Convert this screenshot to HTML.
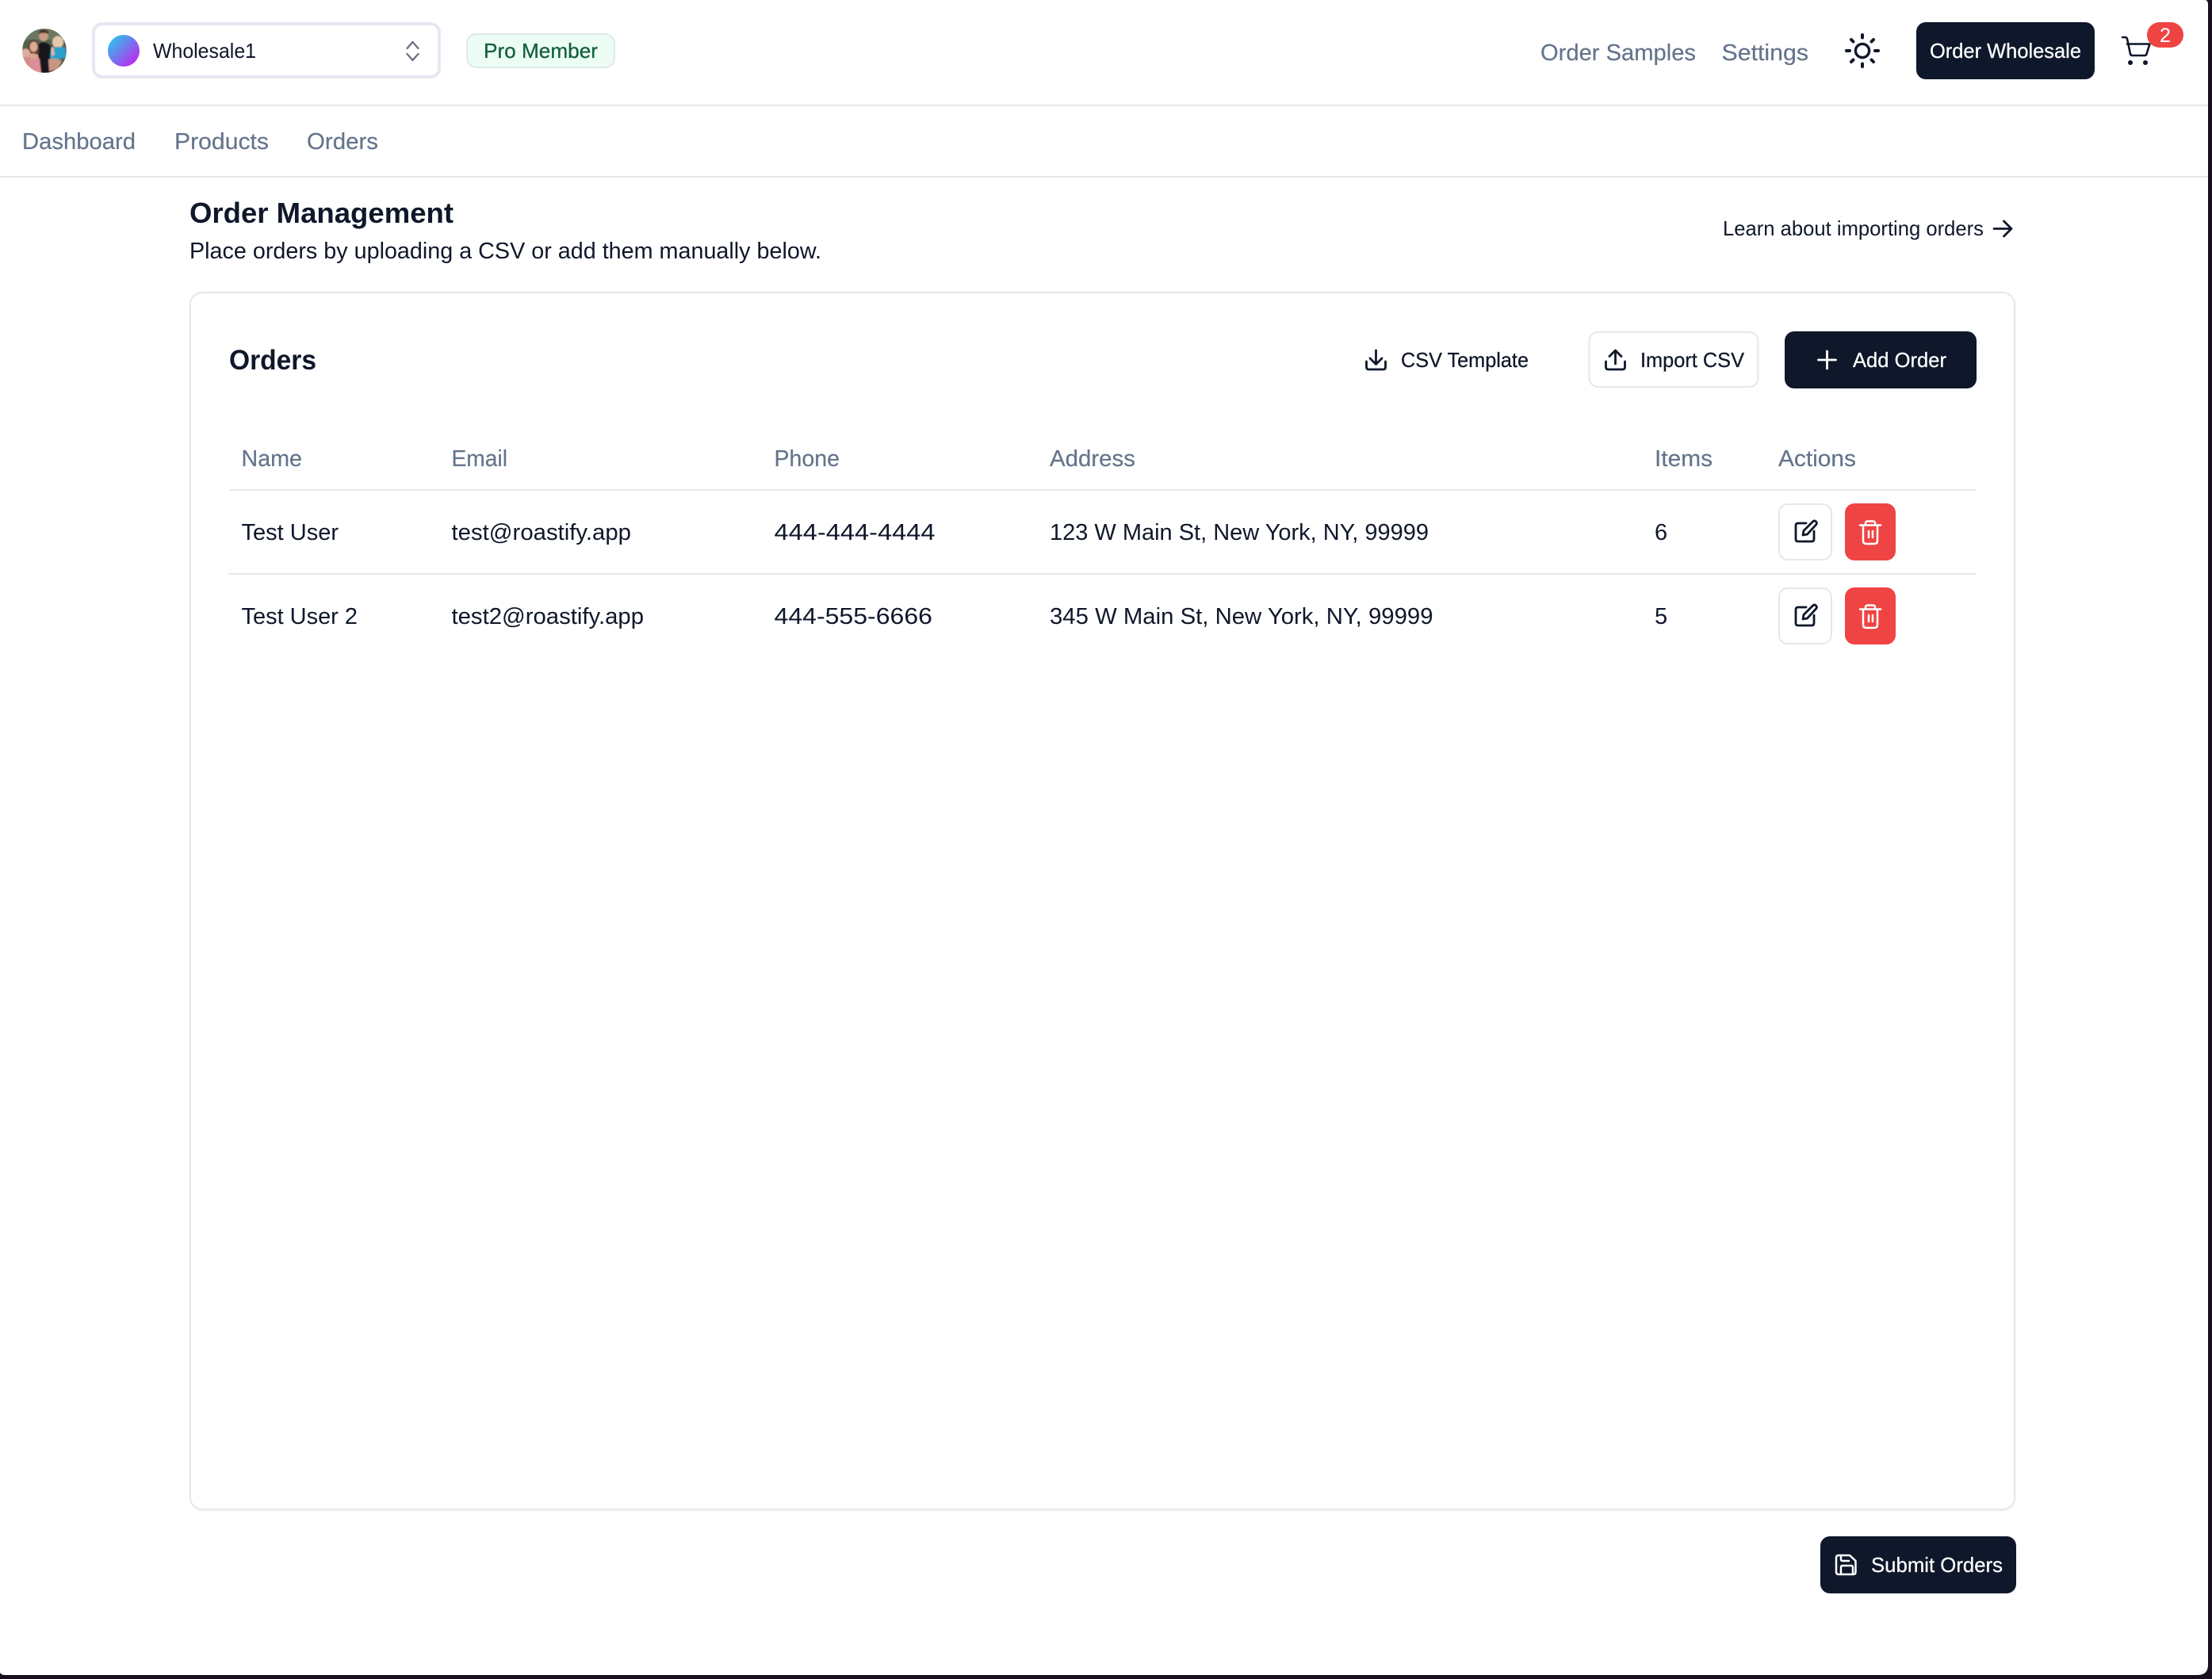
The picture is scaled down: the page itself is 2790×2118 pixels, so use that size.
<!DOCTYPE html>
<html lang="en">
<head>
<meta charset="utf-8">
<title>Order Management</title>
<style>
html,body{margin:0;padding:0;width:2790px;height:2118px;overflow:hidden;background:#190f1e}
svg{display:block}
text{font-family:"Liberation Sans",sans-serif;white-space:pre}
.b{font-size:26px;fill:#0f172a}
.m{font-size:29px;fill:#64748b;stroke:#64748b;stroke-width:.2px}
.t{font-size:29px;fill:#0f172a}
.w{font-size:26px;fill:#fff;stroke:#fff;stroke-width:.25px}
.d{font-size:26px;fill:#0f172a;stroke:#0f172a;stroke-width:.25px}
.ic{fill:none;stroke:#0f172a;stroke-width:2.8;stroke-linecap:round;stroke-linejoin:round}
.iw{fill:none;stroke:#fff;stroke-width:2.8;stroke-linecap:round;stroke-linejoin:round}
</style>
</head>
<body>
<svg width="2790" height="2118" viewBox="0 0 2790 2118" xmlns="http://www.w3.org/2000/svg">
<defs>
<linearGradient id="g" x1="0.1" y1="0.1" x2="0.9" y2="0.9"><stop offset="0" stop-color="#2cc3ec"/><stop offset="1" stop-color="#c026ee"/></linearGradient>
<clipPath id="av"><circle cx="56" cy="64" r="28"/></clipPath>
<filter id="bl" x="-10%" y="-10%" width="120%" height="120%"><feGaussianBlur stdDeviation="0.8"/></filter>
<filter id="sh" x="-2%" y="-2%" width="104%" height="104%"><feDropShadow dx="0" dy="1" stdDeviation="1" flood-color="#000" flood-opacity=".05"/></filter>
</defs>

<path d="M0 0H2781Q2785 0 2785 6V2100Q2785 2113 2772 2113H6Q2 2113 0 2110Z" fill="#fff"/>

<!-- avatar -->
<g clip-path="url(#av)"><g filter="url(#bl)">
<rect x="28" y="36" width="56" height="56" fill="#55644e"/>
<rect x="28" y="36" width="56" height="14" fill="#6a7863"/>
<!-- man -->
<path d="M44 62Q47 54 55 53Q63 54 66 62L70 92H42Z" fill="#17151b"/>
<ellipse cx="55" cy="45" rx="6" ry="7" fill="#c89c82"/>
<path d="M48.500 43Q49 37 55 37Q61 37 61.500 43Q55 40 48.500 43Z" fill="#4a3527"/>
<!-- woman -->
<path d="M35 66Q34 50 42 50Q50 50 49 66L47 72H37Z" fill="#5d3d2a"/>
<ellipse cx="42.500" cy="59" rx="5" ry="6.500" fill="#dcaa90"/>
<path d="M36 68Q42 66 48 69L51 92H36Z" fill="#dba48c"/>
<path d="M37 74H50L52 92H38Z" fill="#dc8f96"/>
<!-- left baby -->
<circle cx="32.500" cy="67" r="5.500" fill="#dcaea0"/>
<path d="M28 72H38L37 84H29Z" fill="#cf8a8c"/>
<!-- right baby -->
<ellipse cx="73" cy="53" rx="7" ry="7.500" fill="#e6c9ad"/>
<path d="M64 62L72 59L82 60L84 72L70 76L63 74Z" fill="#2ba0c8"/>
<path d="M61 75Q70 72 78 77L72 88L62 90Z" fill="#c99580"/>
<path d="M64.500 60L67.500 59L69 69L65 71Z" fill="#e0b99f"/>
</g></g>

<!-- store select -->
<rect x="118" y="30" width="436" height="67" rx="11" fill="#fff" stroke="#e5e8f0" stroke-width="4"/>
<circle cx="156" cy="64" r="20" fill="url(#g)"/>
<text class="b" x="193" y="73" textLength="130" lengthAdjust="spacingAndGlyphs">Wholesale1</text>
<path d="M513.500 61L520.500 53L527.500 61M513.500 68L520.500 76L527.500 68" fill="none" stroke="#6b7280" stroke-width="2.300" stroke-linecap="round" stroke-linejoin="round"/>

<!-- badge -->
<rect x="589" y="43" width="186" height="42" rx="12" fill="#ecfdf5" stroke="#e2e8e6" stroke-width="2"/>
<text x="610" y="73" font-size="26" fill="#14603c" stroke="#14603c" stroke-width=".3" textLength="144" lengthAdjust="spacingAndGlyphs">Pro Member</text>

<!-- header right -->
<text class="m" x="1943" y="76" textLength="196" lengthAdjust="spacingAndGlyphs">Order Samples</text>
<text class="m" x="2171.500" y="76" textLength="109.500" lengthAdjust="spacingAndGlyphs">Settings</text>
<circle cx="2349" cy="64" r="8.600" fill="none" stroke="#0f172a" stroke-width="3.400"/>
<path d="M2349 44V47.500M2349 80.500V84M2329 64H2333M2365 64H2369M2335 50L2337.500 52.500M2360.500 75.500L2363 78M2335 78L2337.500 75.500M2360.500 52.500L2363 50" fill="none" stroke="#0f172a" stroke-width="4" stroke-linecap="round"/>
<rect x="2417" y="28" width="225" height="72" rx="12" fill="#0f172a"/>
<text class="w" x="2434" y="73" textLength="191" lengthAdjust="spacingAndGlyphs">Order Wholesale</text>
<path class="ic" d="M2677 47H2680.500Q2682.500 47 2683 49L2687 68Q2687.500 70 2689.500 70H2705Q2707 70 2707.500 68L2711.500 55.500H2683" style="stroke-width:2.600"/>
<circle cx="2687" cy="79" r="3" fill="#0f172a"/><circle cx="2706" cy="79" r="3" fill="#0f172a"/>
<rect x="2708" y="28" width="46" height="32" rx="16" fill="#ef4444"/>
<text x="2731" y="53" font-size="25" fill="#fff" text-anchor="middle">2</text>

<!-- dividers -->
<rect x="0" y="132" width="2785" height="2" fill="#e5e7eb"/>
<rect x="0" y="222" width="2785" height="2" fill="#e5e7eb"/>

<!-- nav -->
<text class="m" x="28" y="188" textLength="143" lengthAdjust="spacingAndGlyphs">Dashboard</text>
<text class="m" x="220" y="188" textLength="119" lengthAdjust="spacingAndGlyphs">Products</text>
<text class="m" x="387" y="188" textLength="90" lengthAdjust="spacingAndGlyphs">Orders</text>

<!-- heading -->
<text x="239" y="281" font-size="36" font-weight="700" fill="#0f172a" textLength="333" lengthAdjust="spacingAndGlyphs">Order Management</text>
<text class="t" x="239" y="326" textLength="797" lengthAdjust="spacingAndGlyphs">Place orders by uploading a CSV or add them manually below.</text>
<text class="b" x="2173" y="297" textLength="329" lengthAdjust="spacingAndGlyphs">Learn about importing orders</text>
<path class="ic" d="M2515 288.500H2536M2527.500 279L2537 288.500L2527.500 298"/>

<!-- card -->
<rect x="240" y="369" width="2301" height="1535" rx="15" fill="#fff" stroke="#e5e7eb" stroke-width="2" filter="url(#sh)"/>
<text x="289" y="466" font-size="35" font-weight="700" fill="#0f172a" textLength="110" lengthAdjust="spacingAndGlyphs">Orders</text>

<!-- toolbar -->
<path class="ic" d="M1735.500 442V459M1728 452L1735.500 459.500L1743 452M1723.500 456V463Q1723.500 466 1726.500 466H1744.500Q1747.500 466 1747.500 463V456"/>
<text class="d" x="1767" y="463" textLength="161" lengthAdjust="spacingAndGlyphs">CSV Template</text>
<rect x="2004.500" y="419" width="213" height="69" rx="11" fill="#fff" stroke="#e5e7eb" stroke-width="2"/>
<path class="ic" d="M2037.500 459V442M2030 449.500L2037.500 442L2045 449.500M2025.500 456V463Q2025.500 466 2028.500 466H2046.500Q2049.500 466 2049.500 463V456"/>
<text class="d" x="2069" y="463" textLength="131" lengthAdjust="spacingAndGlyphs">Import CSV</text>
<rect x="2251" y="418" width="242" height="72" rx="12" fill="#0f172a"/>
<path class="iw" d="M2304.500 443V465M2293.500 454H2315.500"/>
<text class="w" x="2337" y="463" textLength="118" lengthAdjust="spacingAndGlyphs">Add Order</text>

<!-- table head -->
<text class="m" x="304.500" y="588" textLength="76.500" lengthAdjust="spacingAndGlyphs">Name</text>
<text class="m" x="569.500" y="588" textLength="70.500" lengthAdjust="spacingAndGlyphs">Email</text>
<text class="m" x="976.500" y="588" textLength="82.500" lengthAdjust="spacingAndGlyphs">Phone</text>
<text class="m" x="1324" y="588" textLength="108" lengthAdjust="spacingAndGlyphs">Address</text>
<text class="m" x="2087" y="588" textLength="73" lengthAdjust="spacingAndGlyphs">Items</text>
<text class="m" x="2243" y="588" textLength="98" lengthAdjust="spacingAndGlyphs">Actions</text>
<rect x="289" y="617" width="2204" height="2" fill="#e5e7eb"/>

<!-- row 1 -->
<text class="t" x="304.500" y="681" textLength="122.500" lengthAdjust="spacingAndGlyphs">Test User</text>
<text class="t" x="569.500" y="681" textLength="226.500" lengthAdjust="spacingAndGlyphs">test@roastify.app</text>
<text class="t" x="976.500" y="681" textLength="203" lengthAdjust="spacingAndGlyphs">444-444-4444</text>
<text class="t" x="1324" y="681" textLength="478" lengthAdjust="spacingAndGlyphs">123 W Main St, New York, NY, 99999</text>
<text class="t" x="2087" y="681">6</text>
<rect x="2244" y="636" width="66" height="70" rx="11" fill="#fff" stroke="#e5e7eb" stroke-width="2"/>
<path class="ic" d="M2278 660H2268Q2265 660 2265 663V680Q2265 683 2268 683H2285Q2288 683 2288 680V670M2274 675L2275 669.500L2286.500 658Q2288.500 656 2290.500 658Q2292.500 660 2290.500 662L2279.500 674Z"/>
<rect x="2327" y="635" width="64" height="72" rx="12" fill="#ef4444"/>
<path class="iw" d="M2346 662.500H2372M2350 662.500V682Q2350 686 2354 686H2364Q2368 686 2368 682V662.500M2353 662.500V660Q2353 657.500 2356 657.500H2362Q2365 657.500 2365 660V662.500M2357 670V678M2362 670V678" style="stroke-width:2.500"/>
<rect x="288" y="723" width="2205" height="2" fill="#e5e7eb"/>

<!-- row 2 -->
<text class="t" x="304.500" y="787" textLength="146.500" lengthAdjust="spacingAndGlyphs">Test User 2</text>
<text class="t" x="569.500" y="787" textLength="242.500" lengthAdjust="spacingAndGlyphs">test2@roastify.app</text>
<text class="t" x="976.500" y="787" textLength="199.500" lengthAdjust="spacingAndGlyphs">444-555-6666</text>
<text class="t" x="1324" y="787" textLength="483.500" lengthAdjust="spacingAndGlyphs">345 W Main St, New York, NY, 99999</text>
<text class="t" x="2087" y="787">5</text>
<rect x="2244" y="742" width="66" height="70" rx="11" fill="#fff" stroke="#e5e7eb" stroke-width="2"/>
<path class="ic" transform="translate(0 106)" d="M2278 660H2268Q2265 660 2265 663V680Q2265 683 2268 683H2285Q2288 683 2288 680V670M2274 675L2275 669.500L2286.500 658Q2288.500 656 2290.500 658Q2292.500 660 2290.500 662L2279.500 674Z"/>
<rect x="2327" y="741" width="64" height="72" rx="12" fill="#ef4444"/>
<path class="iw" transform="translate(0 106)" d="M2346 662.500H2372M2350 662.500V682Q2350 686 2354 686H2364Q2368 686 2368 682V662.500M2353 662.500V660Q2353 657.500 2356 657.500H2362Q2365 657.500 2365 660V662.500M2357 670V678M2362 670V678" style="stroke-width:2.500"/>

<!-- submit -->
<rect x="2296" y="1938" width="247" height="72" rx="12" fill="#0f172a"/>
<path class="iw" d="M2319 1962H2333L2340.500 1969V1983Q2340.500 1986 2337.500 1986H2319Q2316 1986 2316 1983V1965Q2316 1962 2319 1962ZM2322 1962V1967Q2322 1969 2324 1969H2332M2322 1986V1977Q2322 1975 2324 1975H2335Q2337 1975 2337 1977V1986" style="stroke-width:2.500"/>
<text class="w" x="2360" y="1983" textLength="166" lengthAdjust="spacingAndGlyphs">Submit Orders</text>
</svg>
</body>
</html>
